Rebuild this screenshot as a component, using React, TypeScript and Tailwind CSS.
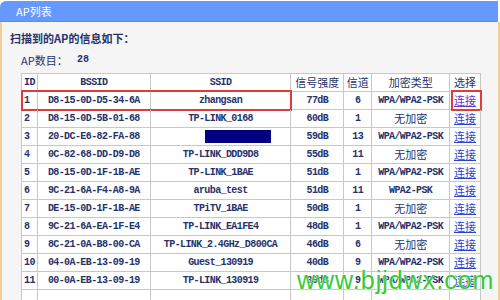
import React from "react";

type Row = [string, string, string, string, string, string];

const rows: Row[] = [
  ["1", "D8-15-0D-D5-34-6A", "zhangsan", "77dB", "6", "WPA/WPA2-PSK"],
  ["2", "D8-15-0D-5B-01-68", "TP-LINK_0168", "60dB", "1", "无加密"],
  ["3", "20-DC-E6-82-FA-88", "", "59dB", "13", "WPA/WPA2-PSK"],
  ["4", "0C-82-68-DD-D9-D8", "TP-LINK_DDD9D8", "55dB", "11", "无加密"],
  ["5", "D8-15-0D-1F-1B-AE", "TP-LINK_1BAE", "51dB", "1", "WPA/WPA2-PSK"],
  ["6", "9C-21-6A-F4-A8-9A", "aruba_test", "51dB", "11", "WPA2-PSK"],
  ["7", "DE-15-0D-1F-1B-AE", "TPiTV_1BAE", "50dB", "1", "无加密"],
  ["8", "9C-21-6A-EA-1F-E4", "TP-LINK_EA1FE4", "48dB", "1", "WPA/WPA2-PSK"],
  ["9", "8C-21-0A-B8-00-CA", "TP-LINK_2.4GHz_D800CA", "46dB", "6", "无加密"],
  ["10", "04-0A-EB-13-09-19", "Guest_130919", "40dB", "9", "WPA/WPA2-PSK"],
  ["11", "00-0A-EB-13-09-19", "TP-LINK_130919", "39dB", "9", "WPA/WPA2-PSK"],
  ["", "", "", "", "", ""],
];

const mono = { fontFamily: '"Liberation Mono","Noto Sans CJK SC",monospace' };
const cjk = { fontFamily: '"Noto Sans CJK SC",sans-serif' };

function Cell({ children, w, className = "" }: { children?: React.ReactNode; w: string; className?: string }) {
  return (
    <div className={`${w} h-full flex items-center justify-center border-r border-[#c8c8c8] ${className}`}>
      {children}
    </div>
  );
}

function Enc({ v }: { v: string }) {
  if (v === "无加密") return <span className="text-[11px] font-normal tracking-normal" style={cjk}>{v}</span>;
  return <span>{v}</span>;
}

export default function App() {
  return (
    <div className="relative w-[500px] h-[300px] overflow-hidden bg-white pt-px">
      <div className="h-[21px] bg-[#6699ff] rounded-tl-[6px] mr-[2px] flex items-center pl-[16px] border-b border-[#5d8cf0]">
        <span className="text-white text-[11px] leading-none" style={cjk}>AP列表</span>
      </div>
      <div className="h-[300px] bg-[#f5f5f5] border-l-2 border-r-2 border-[#f3cd98] text-[#26336b]">
        <div className="pl-[8px] pt-[6px] text-[11px] font-bold leading-[20px]" style={cjk}>
          扫描到的AP的信息如下：
        </div>
        <div className="pl-[19px] pt-[2px] flex text-[11px] leading-[20px]" style={cjk}>
          <span className="w-[56px]">AP数目：</span>
          <span style={mono} className="font-bold text-[10px]">28</span>
        </div>
        <div className="ml-[19px] mt-[3px] w-[460px] border-t border-l border-[#c8c8c8] bg-white text-[10px] font-bold tracking-[-0.6px]" style={mono}>
          <div className="flex h-[18px] border-b border-[#c8c8c8]">
            <Cell w="w-[16px]" className="justify-start pl-[2px]">ID</Cell>
            <Cell w="w-[113px]">BSSID</Cell>
            <Cell w="w-[141px]">SSID</Cell>
            <Cell w="w-[53px]"><span className="text-[11px] font-normal tracking-normal" style={cjk}>信号强度</span></Cell>
            <Cell w="w-[28px]"><span className="text-[11px] font-normal tracking-normal" style={cjk}>信道</span></Cell>
            <Cell w="w-[78px]"><span className="text-[11px] font-normal tracking-normal" style={cjk}>加密类型</span></Cell>
            <Cell w="w-[31px]"><span className="text-[11px] font-normal tracking-normal" style={cjk}>选择</span></Cell>
          </div>
          {rows.map((r, i) => (
            <div key={i} className="relative flex h-[18px] border-b border-[#c8c8c8]">
              <Cell w="w-[16px]" className="justify-start pl-[2px]">{r[0]}</Cell>
              <Cell w="w-[113px]">{r[1]}</Cell>
              <Cell w="w-[141px]">
                {i === 2 ? <div className="w-[66px] h-[13px] bg-[#000080] ml-[34px]" /> : r[2]}
              </Cell>
              <Cell w="w-[53px]">{r[3]}</Cell>
              <Cell w="w-[28px]">{r[4]}</Cell>
              <Cell w="w-[78px]"><Enc v={r[5]} /></Cell>
              <Cell w="w-[31px]">
                {r[0] !== "" && (
                  <span
                    className={`text-[11px] font-normal tracking-normal underline ${i === 0 ? "text-[#6633cc]" : "text-[#2b3fd0]"}`}
                    style={cjk}
                  >
                    连接
                  </span>
                )}
              </Cell>
              {i === 0 && (
                <>
                  <div className="absolute left-[-1px] top-[-2px] w-[271px] h-[21px] border-2 border-[#e23b3b]" />
                  <div className="absolute left-[429px] top-[-2px] w-[31px] h-[21px] border-2 border-[#e23b3b]" />
                </>
              )}
            </div>
          ))}
        </div>
      </div>
      <div
        className="absolute left-[297px] top-[268px] text-[25px] leading-none tracking-[1px] text-[#33cc33]"
        style={{ fontFamily: '"Liberation Sans",Arial,sans-serif', textShadow: "0 0 2px #fff, 0 0 1px #fff" }}
      >
        www.bjjdwx.com
      </div>
    </div>
  );
}
